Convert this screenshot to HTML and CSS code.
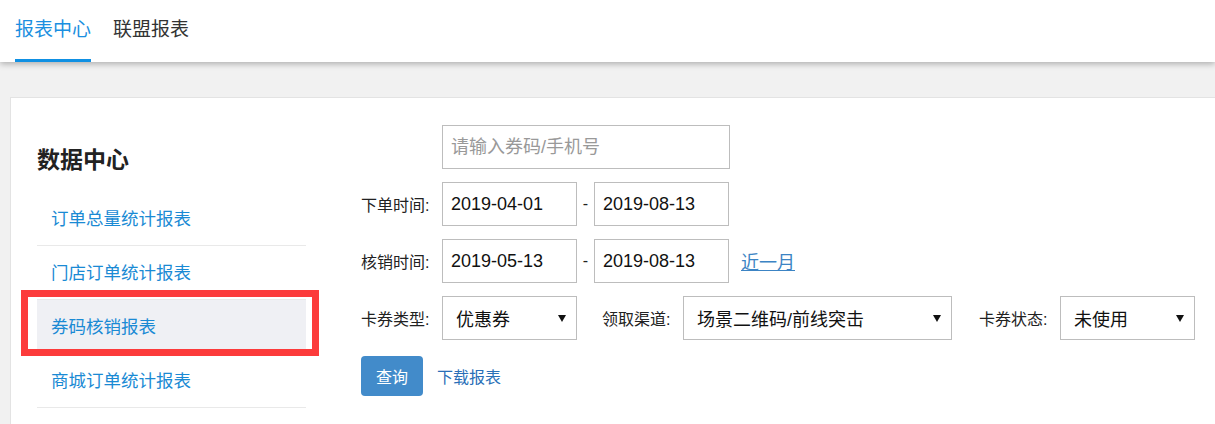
FILE: index.html
```html
<!DOCTYPE html>
<html lang="zh-CN">
<head>
    <meta charset="UTF-8">
    <title>报表中心</title>
    <link rel="stylesheet" href="styles.css">
</head>
<body>
    <!-- Top tabs -->
    <header class="topbar">
        <nav class="tabs">
            <a class="tab active">报表中心</a>
            <a class="tab">联盟报表</a>
        </nav>
    </header>

    <main class="page">
        <section class="card">
            <!-- Sidebar menu -->
            <aside class="sidebar">
                <h2 class="side-title">数据中心</h2>
                <ul class="menu">
                    <li class="menu-item">订单总量统计报表</li>
                    <li class="menu-item">门店订单统计报表</li>
                    <li class="menu-item active">券码核销报表</li>
                    <li class="menu-item">商城订单统计报表</li>
                </ul>
                <div class="mark" aria-hidden="true"></div>
            </aside>

            <!-- Filter form -->
            <div class="filters">
                <div class="row">
                    <span class="label"></span>
                    <input class="field field-search" type="text" placeholder="请输入券码/手机号">
                </div>
                <div class="row">
                    <span class="label">下单时间:</span>
                    <input class="field field-date" type="text" value="2019-04-01">
                    <span class="dash">-</span>
                    <input class="field field-date" type="text" value="2019-08-13">
                </div>
                <div class="row">
                    <span class="label">核销时间:</span>
                    <input class="field field-date" type="text" value="2019-05-13">
                    <span class="dash">-</span>
                    <input class="field field-date" type="text" value="2019-08-13">
                    <a class="quick-link">近一月</a>
                </div>
                <div class="row">
                    <span class="label">卡券类型:</span>
                    <div class="select select-sm">
                        <span>优惠券</span>
                        <svg class="caret" width="8" height="7" viewBox="0 0 8 7"><path d="M0 0H8L4 7Z" fill="#111"/></svg>
                    </div>
                    <span class="label label-gap">领取渠道:</span>
                    <div class="select select-lg">
                        <span>场景二维码/前线突击</span>
                        <svg class="caret" width="8" height="7" viewBox="0 0 8 7"><path d="M0 0H8L4 7Z" fill="#111"/></svg>
                    </div>
                    <span class="label label-gap2">卡券状态:</span>
                    <div class="select select-sm">
                        <span>未使用</span>
                        <svg class="caret" width="8" height="7" viewBox="0 0 8 7"><path d="M0 0H8L4 7Z" fill="#111"/></svg>
                    </div>
                </div>
                <div class="actions">
                    <button class="btn-query">查询</button>
                    <a class="download">下载报表</a>
                </div>
            </div>
        </section>
    </main>
</body>
</html>
```

FILE: styles.css
```css
body, html {
    margin: 0;
    height: 100%;
    font-family: "Liberation Sans", "Noto Sans CJK SC", sans-serif;
    background-color: #f1f1f1;
    color: #333;
    overflow: hidden;
}

body {
    display: flex;
    flex-direction: column;
}

/* Top tabs */
.topbar {
    flex: none;
    height: 62px;
    background-color: #fff;
    box-shadow: 0 2px 6px rgba(0, 0, 0, 0.28);
    position: relative;
    z-index: 2;
}

.tabs {
    display: flex;
    gap: 22px;
    padding-left: 15px;
}

.tab {
    font-size: 19px;
    line-height: 59px;
    border-bottom: 3px solid transparent;
    color: #333;
    cursor: pointer;
}

.tab.active {
    color: #1a8fe0;
    border-bottom-color: #0f90e3;
}

/* Card */
.page {
    flex: 1;
    min-height: 0;
    display: flex;
    padding: 35px 0 0 10px;
}

.card {
    flex: 1;
    display: flex;
    background-color: #fff;
    border-top: 1px solid #e3e3e3;
    border-left: 1px solid #e3e3e3;
    padding-left: 26px;
}

/* Sidebar */
.sidebar {
    position: relative;
    width: 269px;
    padding-top: 46px;
}

.side-title {
    margin: 0 0 16px 0;
    font-size: 23px;
    line-height: 32px;
    font-weight: bold;
    color: #222;
}

.menu {
    list-style: none;
    margin: 0;
    padding: 0;
}

.menu-item {
    height: 51px;
    line-height: 51px;
    padding: 2px 0 0 14px;
    font-size: 17.5px;
    color: #1a8ad4;
    border-bottom: 1px solid #e9e9e9;
    cursor: pointer;
}

.menu-item.active {
    background-color: #eff0f4;
}

.mark {
    position: absolute;
    left: -16px;
    top: 192px;
    width: 298px;
    height: 66px;
    border: 7px solid #fc3b3b;
    box-sizing: border-box;
}

/* Filters */
.filters {
    margin-left: 55px;
    padding-top: 27px;
    display: flex;
    flex-direction: column;
    gap: 13px;
}

.row {
    display: flex;
    align-items: center;
}

.label {
    width: 81px;
    flex: none;
    font-size: 16px;
    color: #222;
}

.label-gap {
    margin-left: 25px;
}

.label-gap2 {
    margin-left: 27px;
}

.field {
    box-sizing: border-box;
    border: 1px solid #bdbdbd;
    font-family: "Liberation Sans", "Noto Sans CJK SC", sans-serif;
    font-size: 18px;
    color: #111;
    padding: 0 8px;
    margin: 0;
    outline: none;
}

.field::placeholder {
    color: #999;
}

.field-search {
    width: 288px;
    height: 44px;
}

.field-date {
    width: 135px;
    height: 44px;
}

.dash {
    width: 17px;
    text-align: center;
    font-size: 16px;
    color: #222;
}

.quick-link {
    margin-left: 12px;
    font-size: 18px;
    color: #3c84c4;
    text-decoration: underline;
    cursor: pointer;
}

.select {
    box-sizing: border-box;
    height: 44px;
    border: 1px solid #bdbdbd;
    display: flex;
    align-items: center;
    justify-content: space-between;
    padding: 0 10px 0 13px;
    font-size: 18px;
    color: #111;
}

.select-sm {
    width: 135px;
}

.select-lg {
    width: 269px;
}

.caret {
    margin-top: 1px;
}

.actions {
    display: flex;
    align-items: center;
    gap: 14px;
    margin-top: 3px;
}

.btn-query {
    width: 62px;
    height: 40px;
    border: none;
    border-radius: 4px;
    background-color: #428bca;
    color: #fff;
    font-family: "Liberation Sans", "Noto Sans CJK SC", sans-serif;
    font-size: 16px;
    cursor: pointer;
}

.download {
    font-size: 16px;
    color: #2a6fb8;
    cursor: pointer;
}
```
